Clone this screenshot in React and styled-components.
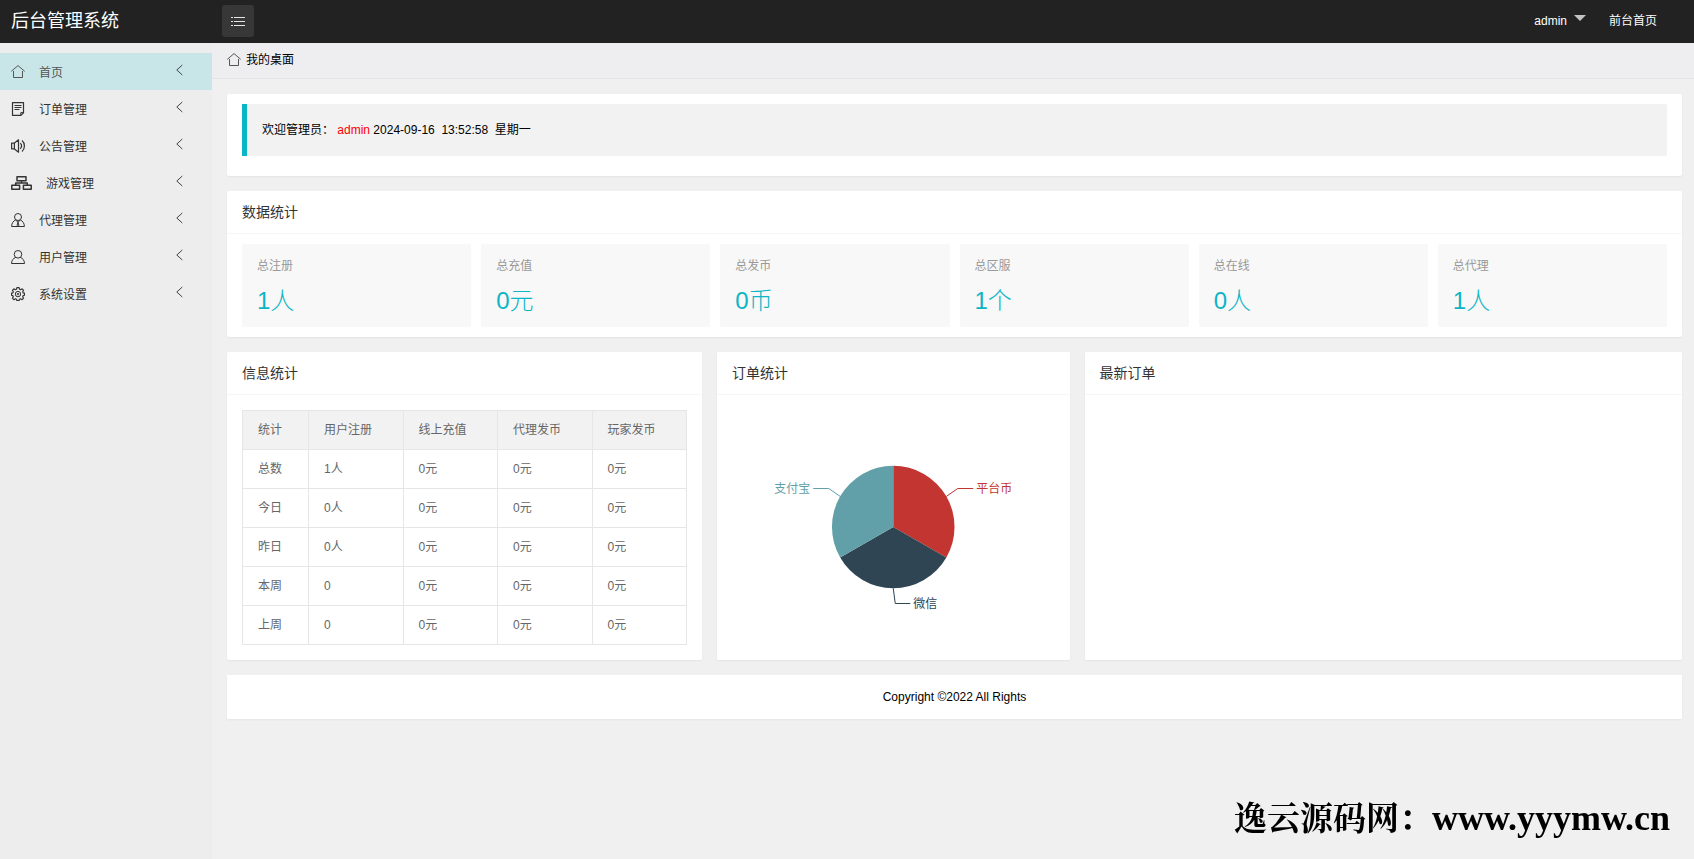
import React from 'react'
import styled, { createGlobalStyle } from 'styled-components'

const accent = '#0ab5c6'

const GlobalStyle = createGlobalStyle`
  * {
    box-sizing: border-box;
  }
  body {
    margin: 0;
    background: #f0f0f0;
    color: #000;
    font-family: "Liberation Sans", Arial, "Noto Sans CJK SC", sans-serif;
    font-size: 12px;
    line-height: 22px;
  }
  a {
    color: inherit;
    text-decoration: none;
  }
  h1, h2, h3, p {
    margin: 0;
    font-weight: 400;
  }
`

const Page = styled.div`
  display: flex;
  flex-direction: column;
  min-height: 100vh;
`

const Header = styled.header`
  display: flex;
  align-items: center;
  height: 43px;
  padding: 0 37px 1px 11px;
  background: #222;
  color: #fff;
`

const Brand = styled.h1`
  width: 211px;
  font-size: 18px;
  line-height: 36px;
`

const MenuButton = styled.button`
  display: flex;
  align-items: center;
  justify-content: center;
  width: 32px;
  height: 32px;
  padding: 0;
  border: 0;
  border-radius: 3px;
  background: #373737;
  color: #e6e6e6;
`

const HeaderNav = styled.nav`
  display: flex;
  gap: 23px;
  margin-left: auto;
`

const UserButton = styled.button`
  display: flex;
  gap: 7px;
  padding: 0;
  border: 0;
  background: none;
  color: #fff;
  font: inherit;
`

const Caret = styled.span`
  height: 0;
  margin-top: 5px;
  border: 6px solid transparent;
  border-top-color: #c2c2c2;
  border-bottom: 0;
`

const Body = styled.div`
  display: flex;
  flex: 1;
`

const Sidebar = styled.nav`
  flex: none;
  width: 212px;
  padding-top: 10px;
  background: #ededed;
`

const NavItem = styled.a`
  display: flex;
  align-items: center;
  height: 37px;
  padding: 0 29px 0 11px;
  background: ${(props) => (props.$active ? '#c8e6e8' : 'none')};
  color: ${(props) => (props.$active ? '#555' : '#333')};

  svg {
    flex: none;
  }
`

const NavLabel = styled.span`
  flex: 1;
  padding: 2px 0 0 14px;
`

const NavArrow = styled.svg`
  margin-bottom: 3px;
`

const Main = styled.main`
  flex: 1;
  min-width: 0;
`

const Breadcrumb = styled.div`
  display: flex;
  align-items: center;
  gap: 5px;
  height: 36px;
  padding: 0 15px 1px;
  border-bottom: 1px solid #e4e4e8;
  background: #eeeef0;
`

const Content = styled.div`
  display: grid;
  grid-template-columns: repeat(12, minmax(0, 1fr));
  gap: 15px;
  padding: 15px 12px 15px 15px;
`

const Card = styled.section`
  grid-column: span ${(props) => props.$span || 12};
  border-radius: 2px;
  background: #fff;
  box-shadow: 0 1px 2px rgba(0, 0, 0, 0.05);
`

const CardTitle = styled.h2`
  padding: 0 15px;
  border-bottom: 1px solid #f6f6f6;
  color: #333;
  font-size: 14px;
  line-height: 42px;
`

const CardBody = styled.div`
  padding: ${(props) => (props.$roomy ? '15px' : '10px 15px')};
`

const Quote = styled.blockquote`
  margin: 0 0 10px;
  padding: 15px;
  border-left: 5px solid ${accent};
  border-radius: 0 2px 2px 0;
  background: #f2f2f2;
`

const UserName = styled.span`
  color: #f00;
`

const Stats = styled.div`
  display: grid;
  grid-template-columns: repeat(6, minmax(0, 1fr));
  gap: 10px;
`

const StatTile = styled.a`
  padding: 11px 15px 10px;
  border-radius: 2px;
  background: #f8f8f8;
`

const StatLabel = styled.h3`
  color: #999;
  font-size: 12px;
  line-height: 22px;
`

const StatValue = styled.p`
  padding-top: 7px;
  color: ${accent};
  font-size: 24px;
  font-weight: 300;
  line-height: 33px;
`

const Table = styled.table`
  width: 100%;
  table-layout: fixed;
  border-collapse: collapse;
  color: #666;

  th, td {
    height: 39px;
    padding: 0 15px;
    border: 1px solid #e6e6e6;
    font-weight: 400;
    text-align: left;
  }
  th {
    background: #f2f2f2;
  }
  th:first-child {
    width: 66px;
  }
`

const PieSvg = styled.svg`
  display: block;
  width: 100%;
  height: 235px;
  font-size: 12px;
`

const Footer = styled.footer`
  grid-column: span 12;
  padding: 11px 15px;
  background: #fff;
  box-shadow: 0 1px 2px rgba(0, 0, 0, 0.05);
  text-align: center;
`

const Watermark = styled.div`
  position: fixed;
  right: 24px;
  bottom: 16px;
  display: flex;
  align-items: baseline;
  font-family: "Liberation Serif", "Noto Serif CJK SC", "Noto Sans CJK SC", serif;
  font-size: 33px;
  font-weight: 700;
  line-height: 48px;
`

const WatermarkUrl = styled.span`
  font-size: 36px;
`

const Icon = ({ width = 14, children }) => (
  <svg
    width={width}
    height="14"
    viewBox={`0 0 ${width} 14`}
    fill="none"
    stroke="currentColor"
    strokeWidth="1"
    strokeLinejoin="round"
    aria-hidden="true"
  >
    {children}
  </svg>
)

const HomeIcon = () => (
  <Icon>
    <path d="M.3 6.3 7 .6l6.7 5.7M2.5 6v6.5h9V6" stroke="#555" />
  </Icon>
)

const OrderIcon = () => (
  <Icon>
    <path d="M1.5.6h11v10.2l-2.6 2.6H1.5z" strokeWidth="1.2" />
    <path d="M3.5 3.5h7M3.5 5.5h7M3.5 7.5h5M9.8 13.2v-2.6h2.7" />
  </Icon>
)

const SpeakerIcon = () => (
  <Icon>
    <path d="M.6 4.2h2.6L7.5.8v12.4L3.2 9.8H.6zM3.4 4.2v5.6" strokeWidth="1.2" />
    <path d="M9.3 4.2c1.5 1.6 1.5 4 0 5.6M11 1.5c3.2 2.6 3.2 8.4 0 11" strokeWidth="1.2" />
  </Icon>
)

const SitemapIcon = () => (
  <Icon width={21}>
    <path
      d="M6 .8h9v3.9H6zM.8 9.3h7.8v3.9H.8zM12.4 9.3h7.8v3.9h-7.8zM10.5 4.8V7M4.7 9.3V7h11.6v2.3"
      strokeWidth="1.5"
    />
  </Icon>
)

const AgentIcon = () => (
  <Icon>
    <circle cx="7" cy="4" r="3.5" />
    <path d="M4.8 6.9C2.2 8 .7 10.1.6 13.5h12.8c-.1-3.4-1.6-5.5-4.2-6.6M4.8 7.2 7 9.2l2.2-2M7 9.2l-.9 3 .9 1.2.9-1.2z" />
  </Icon>
)

const UserIcon = () => (
  <Icon>
    <circle cx="7" cy="4.3" r="3.8" />
    <path d="M4.7 7.4C2.2 8.4.6 10.2.5 13.5h13c-.1-3.3-1.7-5.1-4.2-6.1" />
  </Icon>
)

const GearIcon = () => (
  <Icon>
    <path
      d="M5.9.6h2.2l.4 1.6 1.1.5 1.5-.9 1.5 1.5-.9 1.5.5 1.1 1.3.3v2l-1.3.4-.5 1.1.9 1.5-1.5 1.5-1.5-.9-1.1.5-.4 1.2H5.9l-.4-1.2-1.1-.5-1.5.9-1.5-1.5.9-1.5-.5-1.1L.5 8.2v-2l1.3-.3.5-1.1-.9-1.5 1.5-1.5 1.5.9 1.1-.5z"
      strokeWidth="1.2"
    />
    <circle cx="7" cy="7.1" r="2.7" />
    <circle cx="7" cy="7.1" r=".8" />
  </Icon>
)

const ChevronIcon = () => (
  <NavArrow width="7" height="12" viewBox="0 0 7 12" fill="none" stroke="#444" aria-hidden="true">
    <path d="M6.3 1 .8 6l5.5 5" />
  </NavArrow>
)

const ListIcon = () => (
  <svg width="14" height="11" viewBox="0 0 14 11" fill="currentColor" aria-hidden="true">
    <path d="M0 1h2v1H0zM3 1h11v1H3zM0 5h2v1H0zM3 5h11v1H3zM0 9h2v1H0zM3 9h11v1H3z" />
  </svg>
)

const navItems = [
  { label: '首页', icon: HomeIcon, active: true },
  { label: '订单管理', icon: OrderIcon },
  { label: '公告管理', icon: SpeakerIcon },
  { label: '游戏管理', icon: SitemapIcon },
  { label: '代理管理', icon: AgentIcon },
  { label: '用户管理', icon: UserIcon },
  { label: '系统设置', icon: GearIcon },
]

const stats = [
  ['总注册', '1人'],
  ['总充值', '0元'],
  ['总发币', '0币'],
  ['总区服', '1个'],
  ['总在线', '0人'],
  ['总代理', '1人'],
]

const columns = ['统计', '用户注册', '线上充值', '代理发币', '玩家发币']

const rows = [
  ['总数', '1人', '0元', '0元', '0元'],
  ['今日', '0人', '0元', '0元', '0元'],
  ['昨日', '0人', '0元', '0元', '0元'],
  ['本周', '0', '0元', '0元', '0元'],
  ['上周', '0', '0元', '0元', '0元'],
]

const OrderPie = () => (
  <PieSvg viewBox="-160 -117 320 235" role="img" aria-label="订单统计">
    <path d="M0 0V-61.3A61.3 61.3 0 0 1 53.1 30.6z" fill="#c23531" />
    <path d="M0 0 53.1 30.6A61.3 61.3 0 0 1-53.1 30.6z" fill="#2f4554" />
    <path d="M0 0-53.1 30.6A61.3 61.3 0 0 1 0-61.3z" fill="#61a0a8" />
    <g fill="none">
      <path d="M53.1-30.6 64.5-38.5H80" stroke="#c23531" />
      <path d="M0 61.3 2 76.5H17" stroke="#2f4554" />
      <path d="M-53.1-30.6-64.5-38.5H-80" stroke="#61a0a8" />
    </g>
    <text x="83" y="-34" fill="#c23531">平台币</text>
    <text x="20" y="81" fill="#2f4554">微信</text>
    <text x="-83" y="-34" fill="#61a0a8" textAnchor="end">支付宝</text>
  </PieSvg>
)

const App = () => (
  <Page>
    <GlobalStyle />
    <Header>
      <Brand>后台管理系统</Brand>
      <MenuButton type="button" aria-label="菜单">
        <ListIcon />
      </MenuButton>
      <HeaderNav>
        <UserButton type="button">
          admin
          <Caret />
        </UserButton>
        <a href="#front">前台首页</a>
      </HeaderNav>
    </Header>
    <Body>
      <Sidebar>
        {navItems.map(({ label, icon: ItemIcon, active }) => (
          <NavItem key={label} href="#" $active={active}>
            <ItemIcon />
            <NavLabel>{label}</NavLabel>
            <ChevronIcon />
          </NavItem>
        ))}
      </Sidebar>
      <Main>
        <Breadcrumb>
          <HomeIcon />
          我的桌面
        </Breadcrumb>
        <Content>
          <Card>
            <CardBody>
              <Quote>
                欢迎管理员： <UserName>admin</UserName> 2024-09-16&nbsp; 13:52:58&nbsp; 星期一
              </Quote>
            </CardBody>
          </Card>
          <Card>
            <CardTitle>数据统计</CardTitle>
            <CardBody>
              <Stats>
                {stats.map(([label, value]) => (
                  <StatTile key={label} href="#">
                    <StatLabel>{label}</StatLabel>
                    <StatValue>{value}</StatValue>
                  </StatTile>
                ))}
              </Stats>
            </CardBody>
          </Card>
          <Card $span={4}>
            <CardTitle>信息统计</CardTitle>
            <CardBody $roomy>
              <Table>
                <thead>
                  <tr>
                    {columns.map((column) => (
                      <th key={column}>{column}</th>
                    ))}
                  </tr>
                </thead>
                <tbody>
                  {rows.map((row) => (
                    <tr key={row[0]}>
                      {row.map((cell, i) => (
                        <td key={i}>{cell}</td>
                      ))}
                    </tr>
                  ))}
                </tbody>
              </Table>
            </CardBody>
          </Card>
          <Card $span={3}>
            <CardTitle>订单统计</CardTitle>
            <CardBody $roomy>
              <OrderPie />
            </CardBody>
          </Card>
          <Card $span={5}>
            <CardTitle>最新订单</CardTitle>
          </Card>
          <Footer>Copyright ©2022 All Rights</Footer>
        </Content>
      </Main>
    </Body>
    <Watermark>
      逸云源码网：<WatermarkUrl>www.yyymw.cn</WatermarkUrl>
    </Watermark>
  </Page>
)

export default App
